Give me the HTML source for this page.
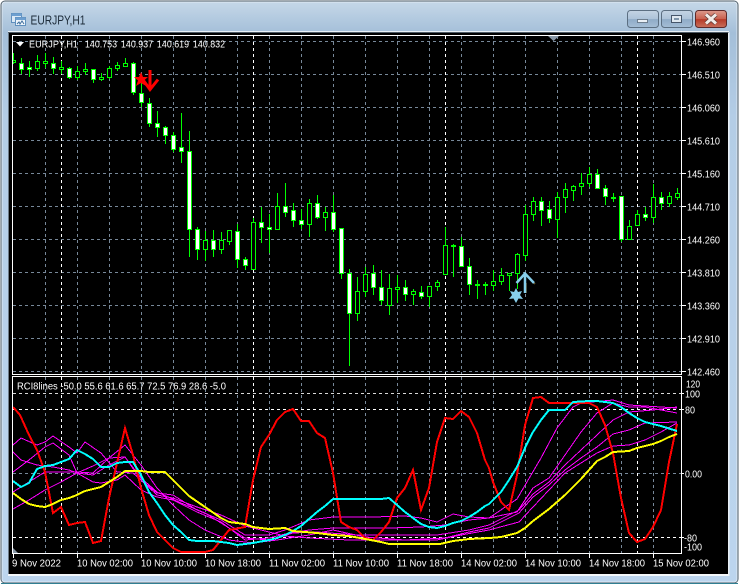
<!DOCTYPE html>
<html><head><meta charset="utf-8"><style>
html,body{margin:0;padding:0;background:#fff;width:739px;height:584px;overflow:hidden}
svg{display:block}
text{font-family:"Liberation Sans",sans-serif;font-size:10px;fill:#fff}
</style></head><body>
<svg width="739" height="584" viewBox="0 0 739 584" xmlns="http://www.w3.org/2000/svg">
<defs>
<linearGradient id="bg" x1="0" y1="0" x2="0" y2="1"><stop offset="0" stop-color="#c6d8e8"/><stop offset=".055" stop-color="#a4bfd9"/><stop offset=".2" stop-color="#b4cde6"/><stop offset="1" stop-color="#bcd5ee"/></linearGradient>
<linearGradient id="btn" x1="0" y1="0" x2="0" y2="1"><stop offset="0" stop-color="#c4d4e4"/><stop offset=".5" stop-color="#adc3d9"/><stop offset=".52" stop-color="#8fabc7"/><stop offset="1" stop-color="#a5bed6"/></linearGradient>
<linearGradient id="cls" x1="0" y1="0" x2="0" y2="1"><stop offset="0" stop-color="#dc9a8c"/><stop offset=".5" stop-color="#c9604e"/><stop offset=".52" stop-color="#b63a28"/><stop offset="1" stop-color="#c8705c"/></linearGradient>
</defs>
<rect x="1" y="1" width="737" height="582" rx="4" fill="url(#bg)" stroke="#4a5a66"/>
<rect x="2" y="2" width="735" height="580" rx="3" fill="none" stroke="#e6eef5" stroke-opacity=".8"/>
<path d="M1 583.5H738" stroke="#2f7f92" stroke-width="1"/>
<!-- title icon -->
<g>
<rect x="11.5" y="13.5" width="10" height="9" fill="#dbe9f6" stroke="#5f8fbd"/>
<rect x="11.5" y="13.5" width="10" height="2.5" fill="#6d9fd0"/>
<rect x="15.5" y="17.5" width="10" height="8" fill="#eef5fb" stroke="#5f8fbd"/>
<rect x="15.5" y="17.5" width="10" height="2.5" fill="#6d9fd0"/>
<path d="M17 24l2-2 1 2 2-3 2 3" fill="none" stroke="#3d6d9c" stroke-width="1"/>
</g>
<text x="30.5" y="24.5" textLength="55" lengthAdjust="spacingAndGlyphs" style="font-size:12.5px;fill:#1d2c3a">EURJPY,H1</text>
<!-- window buttons -->
<rect x="627.5" y="10.5" width="31" height="17" rx="3" fill="url(#btn)" stroke="#5c6f82"/>
<rect x="637.5" y="19.5" width="10" height="3" fill="#e9eff5" stroke="#5a6a7a" stroke-width=".8"/>
<rect x="661.5" y="10.5" width="31" height="17" rx="3" fill="url(#btn)" stroke="#5c6f82"/>
<rect x="671.5" y="15.5" width="10" height="7" fill="#dfe8f0" stroke="#46566a" stroke-width="1"/>
<rect x="674" y="18" width="5" height="2" fill="#7f95aa"/>
<rect x="695.5" y="10.5" width="31" height="17" rx="3" fill="url(#cls)" stroke="#5e2a2a"/>
<path d="M706 14.5l10 9M716 14.5l-10 9" stroke="#5c3a36" stroke-width="4.5"/>
<path d="M706 14.5l10 9M716 14.5l-10 9" stroke="#f2ece8" stroke-width="3"/>
<!-- client -->
<rect x="8" y="31" width="721" height="545" fill="#e9f0f6"/>
<rect x="9" y="33" width="719" height="541" fill="#000"/>
<path d="M8.5 32V575" stroke="#6d7b88"/>
<path d="M8 32.5H729" stroke="#4f5b66"/>
<path d="M8 575H729" stroke="#f4f7fa" stroke-width="2"/>
<path d="M729 32V576" stroke="#eaf1f7" stroke-width="1"/>
<!-- grid -->
<g fill="none" shape-rendering="crispEdges" stroke-dasharray="3 3" stroke="#778899">
<path d="M13 41.5H681M13 74.5H681M13 107.5H681M13 140.5H681M13 173.5H681M13 206.5H681M13 239.5H681M13 272.5H681M13 305.5H681M13 338.5H681M13 371.5H681M13 473.5H681"/>
<path d="M45.5 36V374M77.5 36V374M109.5 36V374M141.5 36V374M173.5 36V374M205.5 36V374M237.5 36V374M269.5 36V374M301.5 36V374M333.5 36V374M365.5 36V374M397.5 36V374M429.5 36V374M461.5 36V374M493.5 36V374M525.5 36V374M557.5 36V374M589.5 36V374M621.5 36V374M653.5 36V374"/>
<path d="M45.5 377V553M77.5 377V553M109.5 377V553M141.5 377V553M173.5 377V553M205.5 377V553M237.5 377V553M269.5 377V553M301.5 377V553M333.5 377V553M365.5 377V553M397.5 377V553M429.5 377V553M461.5 377V553M493.5 377V553M525.5 377V553M557.5 377V553M589.5 377V553M621.5 377V553M653.5 377V553"/>
<path stroke="#fff" d="M61.5 36V374M253.5 36V374M445.5 36V374M637.5 36V374M61.5 377V553M253.5 377V553M445.5 377V553M637.5 377V553"/>
<path stroke="#d8d8d8" d="M13 393.5H681"/>
<path stroke="#fff" d="M13 409.5H681M13 537.5H681"/>
</g>
<!-- wicks -->
<path shape-rendering="crispEdges" stroke="#00ff00" fill="none" d="M13.5 53V64M21.5 58V74M29.5 61V77M37.5 55V71M45.5 53V68M53.5 57V74M61.5 61V74M69.5 67V79M77.5 66V80M85.5 63V75M93.5 69V83M101.5 73V81M109.5 66V79M117.5 62V71M125.5 58V67M133.5 62V95M141.5 83V107M149.5 98V127M157.5 111V137M165.5 126V144M173.5 132V152M181.5 113V163M189.5 131V257M197.5 227V260M205.5 231V261M213.5 230V257M221.5 232V254M229.5 230V245M237.5 224V268M245.5 257V270M253.5 218V270M261.5 207V243M269.5 214V253M277.5 193V230M285.5 183V217M293.5 203V227M301.5 209V229M309.5 199V237M317.5 195V219M325.5 207V231M333.5 195V232M341.5 228V279M349.5 269V366M357.5 277V321M365.5 267V297M373.5 265V295M381.5 270V305M389.5 274V315M397.5 275V303M405.5 280V301M413.5 289V305M421.5 286V299M429.5 286V307M437.5 280V291M445.5 227V275M453.5 244V277M461.5 237V267M469.5 258V295M477.5 280V299M485.5 282V295M493.5 270V291M501.5 268V285M509.5 273V291M517.5 253V289M525.5 205V261M533.5 197V221M541.5 197V226M549.5 201V223M557.5 192V238M565.5 183V213M573.5 185V201M581.5 173V195M589.5 167V187M597.5 169V188M605.5 185V205M613.5 193V202M621.5 196V242M629.5 220V239M637.5 210V225M645.5 207V221M653.5 184V223M661.5 192V210M669.5 192V207M677.5 188V200"/>
<!-- bullish (black) bodies -->
<path shape-rendering="crispEdges" stroke="#00ff00" fill="#000" d="M13 60.5h2.5v2h-2.5zM35.5 61.5h4v7h-4zM43.5 61.5h4v2h-4zM59.5 67.5h4v2h-4zM75.5 71.5h4v6h-4zM83.5 69.5h4v2h-4zM99.5 77.5h4v2h-4zM107.5 68.5h4v9h-4zM115.5 65.5h4v3h-4zM123.5 63.5h4v3h-4zM203.5 240.5h4v9h-4zM219.5 240.5h4v9h-4zM227.5 230.5h4v11h-4zM251.5 222.5h4v47h-4zM275.5 206.5h4v23h-4zM307.5 203.5h4v21h-4zM323.5 212.5h4v5h-4zM355.5 291.5h4v22h-4zM363.5 274.5h4v17h-4zM387.5 288.5h4v17h-4zM395.5 287.5h4v2h-4zM411.5 291.5h4v3h-4zM427.5 286.5h4v10h-4zM435.5 282.5h4v4h-4zM443.5 245.5h4v29h-4zM451.5 245.5h4v1h-4zM475.5 284.5h4v1h-4zM483.5 284.5h4v1h-4zM491.5 281.5h4v4h-4zM499.5 275.5h4v6h-4zM507.5 273.5h4v2h-4zM515.5 254.5h4v19h-4zM523.5 214.5h4v41h-4zM531.5 201.5h4v13h-4zM555.5 197.5h4v22h-4zM563.5 189.5h4v8h-4zM571.5 186.5h4v4h-4zM579.5 183.5h4v3h-4zM587.5 174.5h4v9h-4zM611.5 197.5h4v1h-4zM627.5 226.5h4v13h-4zM635.5 214.5h4v11h-4zM651.5 197.5h4v20h-4zM667.5 196.5h4v7h-4zM675.5 193.5h4v4h-4z"/>
<!-- bearish (white) bodies -->
<path shape-rendering="crispEdges" stroke="#00ff00" fill="#fff" d="M19.5 63.5h4v6h-4zM27.5 67.5h4v2h-4zM51.5 63.5h4v5h-4zM67.5 68.5h4v9h-4zM91.5 69.5h4v10h-4zM131.5 63.5h4v29h-4zM139.5 93.5h4v9h-4zM147.5 103.5h4v20h-4zM155.5 123.5h4v4h-4zM163.5 127.5h4v8h-4zM171.5 135.5h4v14h-4zM179.5 147.5h4v4h-4zM187.5 151.5h4v78h-4zM195.5 229.5h4v20h-4zM211.5 240.5h4v9h-4zM235.5 231.5h4v28h-4zM243.5 259.5h4v6h-4zM259.5 222.5h4v5h-4zM267.5 227.5h4v2h-4zM283.5 206.5h4v6h-4zM291.5 210.5h4v10h-4zM299.5 220.5h4v4h-4zM315.5 203.5h4v14h-4zM331.5 212.5h4v17h-4zM339.5 228.5h4v45h-4zM347.5 273.5h4v40h-4zM371.5 273.5h4v14h-4zM379.5 287.5h4v13h-4zM403.5 287.5h4v7h-4zM419.5 292.5h4v4h-4zM459.5 246.5h4v20h-4zM467.5 266.5h4v18h-4zM539.5 201.5h4v9h-4zM547.5 209.5h4v9h-4zM595.5 174.5h4v14h-4zM603.5 188.5h4v8h-4zM619.5 196.5h4v43h-4zM643.5 214.5h4v3h-4zM659.5 197.5h4v6h-4z"/>
<!-- red signal -->
<polygon fill="#ff0000" points="141,72 143,77 148,77 144,80.5 146,86 141,83 136,86 138,80.5 134,77 139,77"/>
<path d="M150 70V89M143.5 80.5L150 89.5L158 79.5" fill="none" stroke="#ff0000" stroke-width="3"/>
<!-- blue signal -->
<path d="M526 283V293M534 283L535 284" fill="none" stroke="#6b5a2a" stroke-width="1.5"/>
<path d="M525 275V293M516.5 283L525 273.5L534 283" fill="none" stroke="#87ceeb" stroke-width="2.5"/>
<polygon fill="#87ceeb" points="516,288 518,292 522,291 520,295 523,299 518.5,298.5 516,303 513.5,298.5 509,299 512,295 510,291 514,292"/>
<!-- magenta lines -->
<g fill="none" stroke="#ff00ff" stroke-width="1" shape-rendering="crispEdges">
<polyline points="13,445 21,438 37,445 45,442 53,436 69,447 77,453 85,442 101,453 117,472 133,473 141,480 157,493 173,495 197,510 221,520 245,535 269,535 285,530 309,520 333,517 373,517 405,516 421,518 437,522 453,514 469,517 489,518 517,499 541,458 557,428 573,407 581,403 613,400 629,405 677,408"/>
<polyline points="13,452 21,460 37,465 53,467 69,470 77,473 93,482 101,483 117,480 125,475 141,490 157,497 173,500 197,512 221,522 245,540 269,538 285,534 309,530 333,528 389,528 421,527 445,525 469,520 489,518 517,512 533,488 549,478 565,455 581,432 597,413 613,403 629,407 645,407 677,413"/>
<polyline points="13,472 29,460 45,447 53,443 69,455 77,473 93,475 109,465 125,457 141,478 157,492 181,503 205,513 229,528 245,538 269,540 293,533 317,532 357,535 389,535 437,535 469,530 489,525 519,510 533,494 549,482 565,465 581,450 597,435 613,420 629,412 653,410 677,407"/>
<polyline points="13,509 29,500 45,490 61,482 77,473 93,466 109,458 125,445 141,465 157,488 173,505 189,520 205,530 229,540 253,543 277,540 309,535 333,530 365,537 405,540 445,538 469,532 489,528 519,513 533,497 549,485 565,470 581,458 597,447 613,434 629,430 645,423 677,422"/>
<polyline points="13,492 29,482 45,472 61,472 77,472 93,473 109,458 125,457 141,480 157,495 173,498 197,507 221,515 245,526 261,530 285,536 309,538 349,540 397,540 437,540 461,535 489,530 519,522 533,507 549,490 565,473 581,463 597,453 613,446 629,445 645,440 661,432 677,423"/>
</g>
<!-- red RCI -->
<polyline fill="none" stroke="#ff0000" stroke-width="2" shape-rendering="crispEdges" points="13,407 20,415 29,435 37,450 45,472 53,513 61,507 69,525 77,523 85,522 93,543 101,541 109,498 125,428 133,455 141,488 149,515 157,532 165,540 173,548 181,552 205,552 213,550 229,530 245,527 253,480 261,447 269,435 277,420 285,412 293,409 301,421 309,421 317,433 325,438 333,473 341,522 349,527 357,530 365,538 373,540 381,532 389,522 397,498 405,488 413,470 421,510 429,488 437,442 445,418 453,419 461,411 469,417 477,433 485,460 489,468 493,482 501,502 509,510 517,475 525,425 533,398 541,397 549,403 589,403 597,407 605,425 613,453 621,498 629,533 637,542 645,539 653,527 661,510 669,462 677,424"/>
<!-- cyan -->
<polyline fill="none" stroke="#00ffff" stroke-width="2" shape-rendering="crispEdges" points="13,481 21,487 29,483 37,469 45,466 53,465 69,459 77,450 85,454 93,459 101,467 109,467 117,463 125,462 133,462 141,475 149,492 157,503 165,515 173,525 181,532 189,540 197,541 213,541 229,543 237,545 253,543 269,540 277,538 285,535 293,531 301,526 309,519 317,512 325,506 333,499 381,499 389,498 397,505 405,512 413,518 421,524 429,527 437,528 445,526 453,523 461,521 469,517 477,512 485,506 489,504 501,492 509,480 517,467 525,448 533,432 541,420 549,410 565,410 573,402 589,401 597,401 613,403 621,407 629,413 637,418 645,422 661,426 677,431"/>
<!-- yellow -->
<polyline fill="none" stroke="#ffff00" stroke-width="2" shape-rendering="crispEdges" points="13,493 21,499 29,504 37,506 45,507 53,504 61,500 69,498 77,495 85,491 101,487 109,482 117,477 125,471 141,471 149,472 165,472 173,480 189,496 205,507 221,518 229,522 245,524 253,527 261,528 269,529 285,528 293,531 317,533 333,535 349,536 365,539 381,542 389,544 440,544 453,541 469,539 490,538 501,537 509,535 517,533 525,528 533,521 541,515 549,509 557,502 565,495 573,487 581,479 589,470 597,461 605,457 613,452 629,451 637,448 645,446 653,444 661,441 669,437 677,434"/>
<!-- frames -->
<g fill="none" stroke="#fff" shape-rendering="crispEdges">
<rect x="12.5" y="35.5" width="669" height="339"/>
<rect x="12.5" y="376.5" width="669" height="177"/>
<path d="M682 41.5h4M682 74.5h4M682 107.5h4M682 140.5h4M682 173.5h4M682 206.5h4M682 239.5h4M682 272.5h4M682 305.5h4M682 338.5h4M682 371.5h4"/>
<path d="M682 393.5h2M682 409.5h2M682 473.5h2M682 537.5h2"/>
<path d="M13.5 554v4M77.5 554v4M141.5 554v4M205.5 554v4M269.5 554v4M333.5 554v4M397.5 554v4M461.5 554v4M525.5 554v4M589.5 554v4M653.5 554v4"/>
</g>
<polygon points="548,36 559,36 553.5,41" fill="#8897a6"/>
<polygon points="13,548 13,553 18,553" fill="#8897a6"/>
<polygon points="16,42 24,42 20,46.5" fill="#fff"/>
<!-- labels -->
<text x="29" y="47.5" textLength="49" lengthAdjust="spacingAndGlyphs">EURJPY,H1</text>
<text x="85" y="47.5" textLength="32" lengthAdjust="spacingAndGlyphs">140.753</text>
<text x="121" y="47.5" textLength="32" lengthAdjust="spacingAndGlyphs">140.937</text>
<text x="157" y="47.5" textLength="32" lengthAdjust="spacingAndGlyphs">140.619</text>
<text x="193" y="47.5" textLength="32" lengthAdjust="spacingAndGlyphs">140.832</text>
<text x="17" y="389.5" textLength="209" lengthAdjust="spacingAndGlyphs">RCI8lines -50.0 55.6 61.6 65.7 72.5 76.9 28.6 -5.0</text>
<g>
<text x="687" y="45.5" textLength="33" lengthAdjust="spacingAndGlyphs">146.960</text>
<text x="687" y="78.5" textLength="33" lengthAdjust="spacingAndGlyphs">146.510</text>
<text x="687" y="111.5" textLength="33" lengthAdjust="spacingAndGlyphs">146.060</text>
<text x="687" y="144.5" textLength="33" lengthAdjust="spacingAndGlyphs">145.610</text>
<text x="687" y="177.5" textLength="33" lengthAdjust="spacingAndGlyphs">145.160</text>
<text x="687" y="210.5" textLength="33" lengthAdjust="spacingAndGlyphs">144.710</text>
<text x="687" y="243.5" textLength="33" lengthAdjust="spacingAndGlyphs">144.260</text>
<text x="687" y="276.5" textLength="33" lengthAdjust="spacingAndGlyphs">143.810</text>
<text x="687" y="309.5" textLength="33" lengthAdjust="spacingAndGlyphs">143.360</text>
<text x="687" y="342.5" textLength="33" lengthAdjust="spacingAndGlyphs">142.910</text>
<text x="687" y="375.5" textLength="33" lengthAdjust="spacingAndGlyphs">142.460</text>
<text x="686" y="387.5" textLength="14" lengthAdjust="spacingAndGlyphs">120</text>
<text x="685" y="397.5" textLength="15" lengthAdjust="spacingAndGlyphs">100</text>
<text x="685" y="413.5" textLength="10" lengthAdjust="spacingAndGlyphs">80</text>
<text x="685" y="477.5" textLength="17" lengthAdjust="spacingAndGlyphs">0.00</text>
<text x="684" y="541.5" textLength="13" lengthAdjust="spacingAndGlyphs">-80</text>
<text x="684" y="550.5" textLength="18" lengthAdjust="spacingAndGlyphs">-100</text>
</g>
<g>
<text x="12" y="566.5" textLength="49" lengthAdjust="spacingAndGlyphs">9 Nov 2022</text>
<text x="77" y="566.5" textLength="56" lengthAdjust="spacingAndGlyphs">10 Nov 02:00</text>
<text x="141" y="566.5" textLength="56" lengthAdjust="spacingAndGlyphs">10 Nov 10:00</text>
<text x="205" y="566.5" textLength="56" lengthAdjust="spacingAndGlyphs">10 Nov 18:00</text>
<text x="269" y="566.5" textLength="56" lengthAdjust="spacingAndGlyphs">11 Nov 02:00</text>
<text x="333" y="566.5" textLength="56" lengthAdjust="spacingAndGlyphs">11 Nov 10:00</text>
<text x="397" y="566.5" textLength="56" lengthAdjust="spacingAndGlyphs">11 Nov 18:00</text>
<text x="461" y="566.5" textLength="56" lengthAdjust="spacingAndGlyphs">14 Nov 02:00</text>
<text x="525" y="566.5" textLength="56" lengthAdjust="spacingAndGlyphs">14 Nov 10:00</text>
<text x="589" y="566.5" textLength="56" lengthAdjust="spacingAndGlyphs">14 Nov 18:00</text>
<text x="653" y="566.5" textLength="56" lengthAdjust="spacingAndGlyphs">15 Nov 02:00</text>
</g>
</svg>
</body></html>
